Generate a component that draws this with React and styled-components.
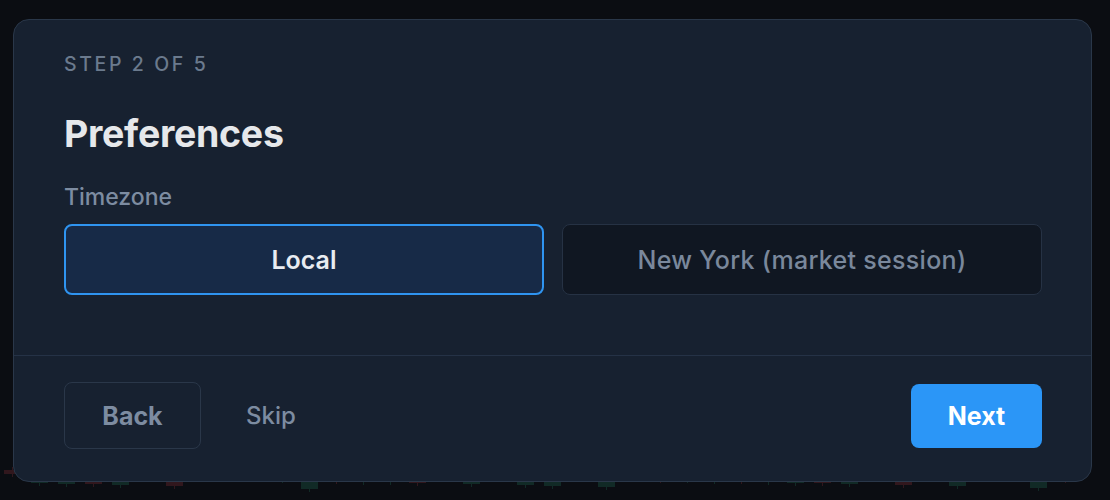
import { useState } from 'react';
import styled, { createGlobalStyle } from 'styled-components';

const GlobalStyle = createGlobalStyle`
    html, body {
        margin: 0;
        padding: 0;
        background: #0b0d12;
    }
    body {
        font-family: Inter, "Noto Sans", "Liberation Sans", sans-serif;
        -webkit-font-smoothing: antialiased;
    }
`;

const Page = styled.div`
    position: relative;
    width: 1110px;
    height: 500px;
    overflow: hidden;
    background: #0b0d12;
    padding: 19px 18px 0 13px;
    box-sizing: border-box;
`;

const Backdrop = styled.svg`
    position: absolute;
    left: 0;
    bottom: 0;
    width: 1110px;
    height: 40px;
    opacity: 0.3;
`;

const Card = styled.section`
    position: relative;
    display: flex;
    flex-direction: column;
    height: 463px;
    box-sizing: border-box;
    background: #172130;
    border: 1px solid #2a3749;
    border-radius: 16px;
`;

const Body = styled.div`
    display: flex;
    flex-direction: column;
    padding: 32px 49px 0 50px;
    flex: 1;
`;

const Step = styled.div`
    font-size: 19.5px;
    line-height: 24px;
    letter-spacing: 2.6px;
    color: #6b7a8d;
    font-weight: 500;
`;

const Title = styled.h2`
    margin: 35px 0 0;
    font-size: 37.5px;
    line-height: 46px;
    font-weight: 700;
    color: #e6e8eb;
    letter-spacing: -0.3px;
`;

const Label = styled.div`
    margin-top: 25px;
    font-size: 23px;
    line-height: 30px;
    font-weight: 500;
    color: #7d8ca1;
`;

const Options = styled.div`
    display: grid;
    grid-template-columns: 1fr 1fr;
    gap: 18px;
    margin-top: 12px;
`;

const Option = styled.button`
    height: 71px;
    border-radius: 8px;
    font-family: inherit;
    font-size: 25px;
    cursor: pointer;
    border: ${({ $active }) => ($active ? '2px solid #2f94f0' : '1px solid #263244')};
    background: ${({ $active }) => ($active ? '#172a47' : '#101722')};
    color: ${({ $active }) => ($active ? '#e8ecf1' : '#7a889c')};
    font-weight: ${({ $active }) => ($active ? 600 : 500)};
    letter-spacing: ${({ $active }) => ($active ? '0' : '0.3px')};
`;

const Footer = styled.div`
    display: flex;
    align-items: center;
    gap: 45px;
    padding: 26px 49px 32px 50px;
    border-top: 1px solid #253246;
`;

const BackButton = styled.button`
    width: 137px;
    height: 67px;
    border-radius: 8px;
    border: 1px solid #2a3749;
    background: transparent;
    color: #7d8ca1;
    font-family: inherit;
    font-size: 25px;
    font-weight: 700;
`;

const SkipButton = styled.button`
    border: none;
    background: none;
    padding: 0;
    color: #7d8ca1;
    font-family: inherit;
    font-size: 24px;
    font-weight: 500;
`;

const NextButton = styled.button`
    margin-left: auto;
    width: 131px;
    height: 64px;
    border: none;
    border-radius: 8px;
    background: #2b96f7;
    color: #ffffff;
    font-family: inherit;
    font-size: 25px;
    font-weight: 700;
`;

const candles = Array.from({ length: 40 }, (_, i) => ({
    x: 4 + i * 27,
    up: (i * 7) % 3 !== 0,
    h: 4 + ((i * 13) % 9),
    y: 10 + ((i * 5) % 8),
}));

const App = () => {
    const [zone, setZone] = useState('local');
    return (
        <>
            <GlobalStyle />
            <Page>
                <Backdrop viewBox="0 0 1110 40">
                    {candles.map((c, i) => (
                        <g key={i} fill={c.up ? '#1f6f55' : '#8a3038'}>
                            <rect x={c.x + 8} y={c.y - 3} width="1" height={c.h + 6} />
                            <rect x={c.x} y={c.y} width="17" height={c.h} />
                        </g>
                    ))}
                </Backdrop>
                <Card>
                    <Body>
                        <Step>STEP 2 OF 5</Step>
                        <Title>Preferences</Title>
                        <Label>Timezone</Label>
                        <Options>
                            <Option $active={zone === 'local'} onClick={() => setZone('local')}>
                                Local
                            </Option>
                            <Option $active={zone === 'ny'} onClick={() => setZone('ny')}>
                                New York (market session)
                            </Option>
                        </Options>
                    </Body>
                    <Footer>
                        <BackButton>Back</BackButton>
                        <SkipButton>Skip</SkipButton>
                        <NextButton>Next</NextButton>
                    </Footer>
                </Card>
            </Page>
        </>
    );
};

export default App;
